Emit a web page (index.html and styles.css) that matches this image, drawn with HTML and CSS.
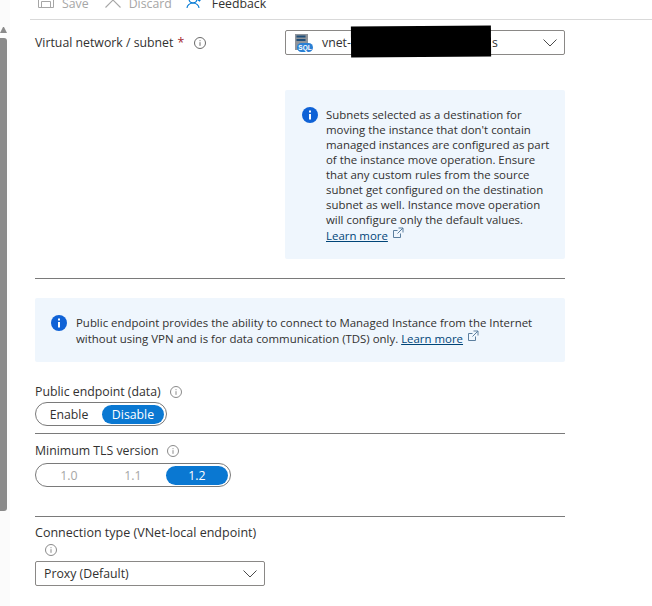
FILE: index.html
```html
<!DOCTYPE html>
<html lang="en">
<head>
<meta charset="utf-8">
<title>Networking</title>
<link rel="stylesheet" href="styles.css">
</head>
<body>
<div class="scrollbar">
  <div class="scroll-arrow"></div>
  <div class="scroll-thumb"></div>
</div>
<div class="page">
  <div class="toolbar">
    <span class="tool disabled">
      <svg class="tool-icon" width="16" height="16" viewBox="0 0 16 16" fill="none" stroke="#a6a6a6"><path d="M0.500 0.500h12.500l2.500 2.500v12.500h-15z"/><path d="M3.500 15.500v-6h9v6M4.500 0.500v3h6v-3"/></svg>
      Save
    </span>
    <span class="tool disabled">
      <svg class="tool-icon" width="16" height="16" viewBox="0 0 16 16" fill="none" stroke="#a6a6a6" stroke-width="1.100"><path d="M0.500 0.500l15 15M15.500 0.500l-15 15"/></svg>
      Discard
    </span>
    <span class="tool">
      <svg class="tool-icon" width="18" height="16" viewBox="0 0 18 16" fill="none" stroke="#0078d4" stroke-width="1.100"><circle cx="7" cy="7" r="4"/><path d="M1 16c0-2.500 2.500-5 6-5s6 2.500 6 5M11.500 7.500l2 1.500 3.500-5"/></svg>
      Feedback
    </span>
  </div>

  <div class="vnet-row">
    <div class="label-col">
      <span class="label">Virtual network / subnet <span class="req">*</span></span>
      <svg class="info" width="12" height="12" viewBox="0 0 12 12"><circle cx="6" cy="6" r="5.500" fill="none" stroke="#6a6a6a"/><path d="M6 5.200v3.600M6 3.200v1" stroke="#6a6a6a"/></svg>
    </div>
    <div class="field-col">
      <div class="select select-wide">
        <svg class="sql-icon" width="18" height="18" viewBox="0 0 18 18"><rect x="0" y="0" width="13" height="16" fill="#8f949b"/><rect x="1.500" y="1.500" width="9" height="2" fill="#1f4e79"/><rect x="1.500" y="5" width="9" height="2" fill="#1f4e79"/><rect x="2" y="9" width="16" height="9" rx="4.500" fill="#2a7fd4"/><text x="10" y="16" class="sql-text" text-anchor="middle">SQL</text></svg>
        <span class="select-text">vnet-</span>
        <span class="select-tail">s</span>
        <svg class="chev" width="14" height="8" viewBox="0 0 14 8" fill="none" stroke="#4a4a4a"><path d="M0.500 0.500l6.500 6.500 6.500-6.500"/></svg>
        <div class="redaction"></div>
      </div>
      <div class="info-box info-box-tall">
        <svg class="info-solid" width="16" height="16" viewBox="0 0 16 16"><circle cx="8" cy="8" r="8" fill="#0f62d6"/><rect x="7" y="7" width="2" height="5.500" fill="#fff"/><rect x="7" y="3.500" width="2" height="2" fill="#fff"/></svg>
        <p class="info-text">Subnets selected as a destination for moving the instance that don't contain managed instances are configured as part of the instance move operation. Ensure that any custom rules from the source subnet get configured on the destination subnet as well. Instance move operation will configure only the default values. <a class="link">Learn more</a><svg class="ext" width="12" height="12" viewBox="0 0 12 12" fill="none" stroke="#5c7f9f"><path d="M8.500 6.500v4h-7v-7h4M6.500 1h4.500v4.500M11 1L5.500 6.500"/></svg></p>
      </div>
    </div>
  </div>

  <hr class="rule rule-a">

  <div class="info-box info-box-wide">
    <svg class="info-solid" width="16" height="16" viewBox="0 0 16 16"><circle cx="8" cy="8" r="8" fill="#0f62d6"/><rect x="7" y="7" width="2" height="5.500" fill="#fff"/><rect x="7" y="3.500" width="2" height="2" fill="#fff"/></svg>
    <p class="info-text">Public endpoint provides the ability to connect to Managed Instance from the Internet without using VPN and is for data communication (TDS) only. <a class="link">Learn more</a><svg class="ext" width="12" height="12" viewBox="0 0 12 12" fill="none" stroke="#5c7f9f"><path d="M8.500 6.500v4h-7v-7h4M6.500 1h4.500v4.500M11 1L5.500 6.500"/></svg></p>
  </div>

  <div class="field endpoint">
    <div class="label-col">
      <span class="label">Public endpoint (data)</span>
      <svg class="info" width="12" height="12" viewBox="0 0 12 12"><circle cx="6" cy="6" r="5.500" fill="none" stroke="#8a8a8a"/><path d="M6 5.200v3.600M6 3.200v1" stroke="#8a8a8a"/></svg>
    </div>
    <div class="toggle toggle-two">
      <span class="opt">Enable</span>
      <span class="opt on">Disable</span>
    </div>
  </div>

  <hr class="rule rule-b">

  <div class="field tls">
    <div class="label-col">
      <span class="label">Minimum TLS version</span>
      <svg class="info" width="12" height="12" viewBox="0 0 12 12"><circle cx="6" cy="6" r="5.500" fill="none" stroke="#8a8a8a"/><path d="M6 5.200v3.600M6 3.200v1" stroke="#8a8a8a"/></svg>
    </div>
    <div class="toggle toggle-three">
      <span class="opt off">1.0</span>
      <span class="opt off">1.1</span>
      <span class="opt on">1.2</span>
    </div>
  </div>

  <hr class="rule rule-c">

  <div class="field conn">
    <span class="label label-long">Connection type (VNet-local endpoint)</span>
    <svg class="info info-own" width="12" height="12" viewBox="0 0 12 12"><circle cx="6" cy="6" r="5.500" fill="none" stroke="#8a8a8a"/><path d="M6 5.200v3.600M6 3.200v1" stroke="#8a8a8a"/></svg>
    <div class="select select-narrow">
      <span class="select-text">Proxy (Default)</span>
      <svg class="chev" width="14" height="8" viewBox="0 0 14 8" fill="none" stroke="#4a4a4a"><path d="M0.500 0.500l6.500 6.500 6.500-6.500"/></svg>
    </div>
  </div>
</div>
</body>
</html>
```

FILE: styles.css
```css
* { box-sizing: border-box; }
html, body { margin: 0; padding: 0; }
body {
  width: 652px;
  height: 606px;
  overflow: hidden;
  background: #fff;
  color: #323130;
  font-family: "Open Sans", "Noto Sans", sans-serif;
  font-size: 12.300px;
  display: flex;
}
.scrollbar {
  width: 10px;
  flex: none;
  padding-top: 27px;
  display: flex;
  flex-direction: column;
  align-items: flex-start;
  gap: 5px;
  background: #fbfbfb;
}
.scroll-arrow {
  height: 6px;
  width: 7px;
  border-left: 3.500px solid transparent;
  border-right: 3.500px solid transparent;
  border-bottom: 6px solid #8a8a8a;
}
.scroll-thumb {
  width: 7px;
  height: 473px;
  background: #8a8a8a;
  border-radius: 0 3px 3px 0;
}
.page {
  width: 530px;
  margin-left: 25px;
  display: flex;
  flex-direction: column;
}
.toolbar {
  width: 622px;
  height: 26px;
  margin: -6px 0 0 -5px;
  padding: 0 0 7px 8px;
  display: flex;
  align-items: center;
  gap: 16px;
  flex: none;
  border-bottom: 1px solid #d9d9d9;
}
.tool { display: inline-flex; align-items: center; gap: 8px; white-space: nowrap; }
.tool.disabled { color: #a6a6a6; }
.tool-icon { transform: translateY(-3px); flex: none; }
.tool:last-child { margin-left: -2px; }
.vnet-row { display: flex; margin-top: 10px; flex: none; }
.label-col { display: flex; align-items: center; gap: 9px; height: 25px; }
.vnet-row .label-col { width: 250px; }
.vnet-row .info { margin-left: 1px; }
.label { white-space: nowrap; line-height: 17px; }
.label-long { font-size: 12.520px; }
.req { color: #a4262c; margin-left: 1px; }
.field-col { width: 280px; }
.select {
  position: relative;
  display: flex;
  align-items: center;
  height: 25px;
  border: 1px solid #8a8886;
  border-radius: 2px;
  background: #fff;
}
.select-wide { width: 280px; padding-left: 9px; }
.select-narrow { width: 230px; padding-left: 8px; }
.sql-icon { margin-right: 9px; flex: none; }
.sql-text { font: bold 6.500px "Liberation Sans", sans-serif; fill: #fff; }
.select-tail { position: absolute; left: 206px; top: 3px; }
.chev { position: absolute; right: 7px; top: 8px; }
.redaction {
  position: absolute;
  left: 65px;
  top: -5px;
  width: 140px;
  height: 31px;
  background: #000;
  transform: rotate(-0.4deg);
}
.info-box {
  background: #eff6fd;
  border-radius: 2px;
  display: flex;
  gap: 8px;
}
.info-box-tall { margin-top: 35px; height: 169px; padding: 17px 14px 0 17px; }
.info-box-wide { margin-top: 19px; height: 64px; padding: 17px 16px 0 16px; gap: 9px; }
.info-solid { flex: none; }
.info-text { margin: 0; line-height: 15px; font-size: 11.430px; }
.link { color: #004578; text-decoration: underline; }
.ext { vertical-align: 1px; margin-left: 4px; }
.rule { width: 530px; margin: 0; border: 0; height: 1px; background: #7a7a7a; flex: none; }
.rule-a { margin-top: 19px; }
.field { flex: none; }
.endpoint { margin-top: 20px; }
.endpoint .label-col, .tls .label-col { height: 19px; }
.toggle {
  display: flex;
  align-items: center;
  gap: 2px;
  height: 24px;
  border: 1px solid #7a7a7a;
  border-radius: 12px;
  padding: 0 2px;
  margin-top: 1px;
}
.toggle-two { width: 132px; }
.toggle-three { width: 196px; margin-top: 3px; }
.opt { width: 62px; height: 19px; line-height: 19px; border-radius: 10px; text-align: center; }
.opt.on { background: #0a78d2; color: #fff; }
.opt.off { color: #a6a6a6; }
.rule-b { margin-top: 7px; }
.tls { margin-top: 7px; }
.rule-c { margin-top: 29px; }
.conn { margin-top: 7px; display: flex; flex-direction: column; align-items: flex-start; }
.info-own { margin: 3px 0 5px 10px; }
```
